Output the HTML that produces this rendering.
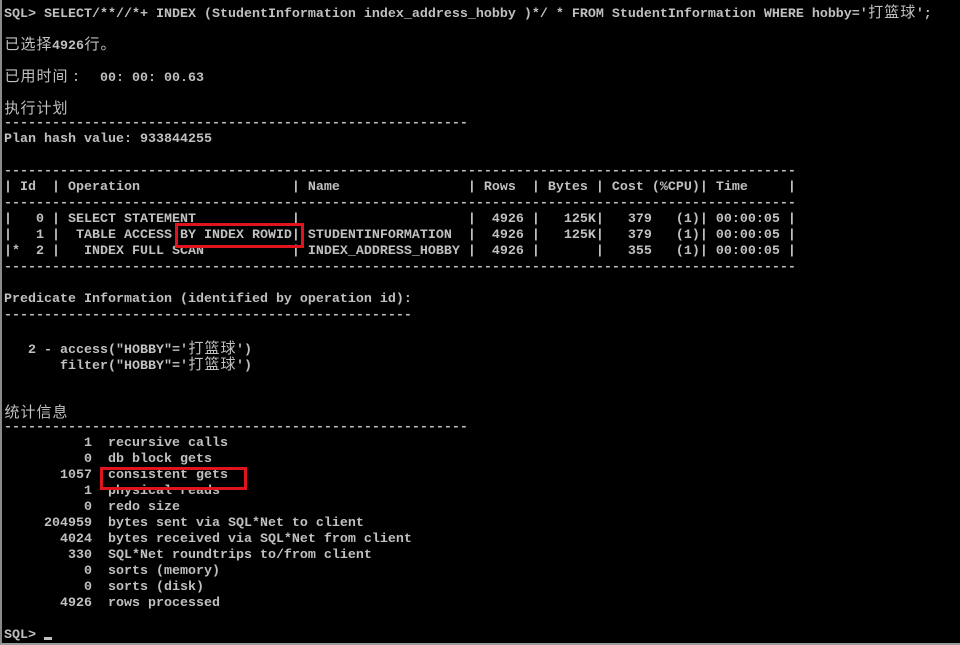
<!DOCTYPE html>
<html><head><meta charset="utf-8"><style>
html,body{margin:0;padding:0;}
body{width:960px;height:645px;background:#000;position:relative;overflow:hidden;
font-family:"Liberation Mono","Noto Sans CJK SC",monospace;font-size:13.33px;font-weight:bold;color:#c0c0c0;}
.l{position:absolute;left:4px;height:16px;line-height:16px;white-space:pre;}
.c{display:inline-block;width:16px;font-weight:normal;font-family:"Noto Sans CJK SC",sans-serif;font-size:15px;text-align:center;}
.box{position:absolute;border:3px solid #e0141c;box-sizing:border-box;}
</style></head><body>
<div style="position:absolute;left:0;top:0;width:2px;height:645px;background:#8a8a8a"></div>
<div style="position:absolute;left:0;top:643px;width:960px;height:2px;background:#9a9a9a"></div>
<div class="l" style="top:4px">SQL> SELECT/**//*+ INDEX (StudentInformation index_address_hobby )*/ * FROM StudentInformation WHERE hobby='<span class="c">打</span><span class="c">篮</span><span class="c">球</span>';</div>
<div class="l" style="top:36px"><span class="c">已</span><span class="c">选</span><span class="c">择</span>4926<span class="c">行</span><span class="c">。</span></div>
<div class="l" style="top:68px"><span class="c">已</span><span class="c">用</span><span class="c">时</span><span class="c">间</span><span class="c">:</span>  00: 00: 00.63</div>
<div class="l" style="top:100px"><span class="c">执</span><span class="c">行</span><span class="c">计</span><span class="c">划</span></div>
<div class="l" style="top:116px">----------------------------------------------------------</div>
<div class="l" style="top:132px">Plan hash value: 933844255</div>
<div class="l" style="top:164px">---------------------------------------------------------------------------------------------------</div>
<div class="l" style="top:180px">| Id  | Operation                   | Name                | Rows  | Bytes | Cost (%CPU)| Time     |</div>
<div class="l" style="top:196px">---------------------------------------------------------------------------------------------------</div>
<div class="l" style="top:212px">|   0 | SELECT STATEMENT            |                     |  4926 |   125K|   379   (1)| 00:00:05 |</div>
<div class="l" style="top:228px">|   1 |  TABLE ACCESS BY INDEX ROWID| STUDENTINFORMATION  |  4926 |   125K|   379   (1)| 00:00:05 |</div>
<div class="l" style="top:244px">|*  2 |   INDEX FULL SCAN           | INDEX_ADDRESS_HOBBY |  4926 |       |   355   (1)| 00:00:05 |</div>
<div class="l" style="top:260px">---------------------------------------------------------------------------------------------------</div>
<div class="l" style="top:292px">Predicate Information (identified by operation id):</div>
<div class="l" style="top:308px">---------------------------------------------------</div>
<div class="l" style="top:340px">   2 - access("HOBBY"='<span class="c">打</span><span class="c">篮</span><span class="c">球</span>')</div>
<div class="l" style="top:356px">       filter("HOBBY"='<span class="c">打</span><span class="c">篮</span><span class="c">球</span>')</div>
<div class="l" style="top:404px"><span class="c">统</span><span class="c">计</span><span class="c">信</span><span class="c">息</span></div>
<div class="l" style="top:420px">----------------------------------------------------------</div>
<div class="l" style="top:436px">          1  recursive calls</div>
<div class="l" style="top:452px">          0  db block gets</div>
<div class="l" style="top:468px">       1057  consistent gets</div>
<div class="l" style="top:484px">          1  physical reads</div>
<div class="l" style="top:500px">          0  redo size</div>
<div class="l" style="top:516px">     204959  bytes sent via SQL*Net to client</div>
<div class="l" style="top:532px">       4024  bytes received via SQL*Net from client</div>
<div class="l" style="top:548px">        330  SQL*Net roundtrips to/from client</div>
<div class="l" style="top:564px">          0  sorts (memory)</div>
<div class="l" style="top:580px">          0  sorts (disk)</div>
<div class="l" style="top:596px">       4926  rows processed</div>
<div class="l" style="top:628px">SQL> </div>
<div style="position:absolute;left:44px;top:637px;width:8px;height:3px;background:#c0c0c0"></div>
<div class="box" style="left:175px;top:223px;width:129px;height:25px"></div>
<div class="box" style="left:100px;top:467px;width:147px;height:23px"></div>
</body></html>
